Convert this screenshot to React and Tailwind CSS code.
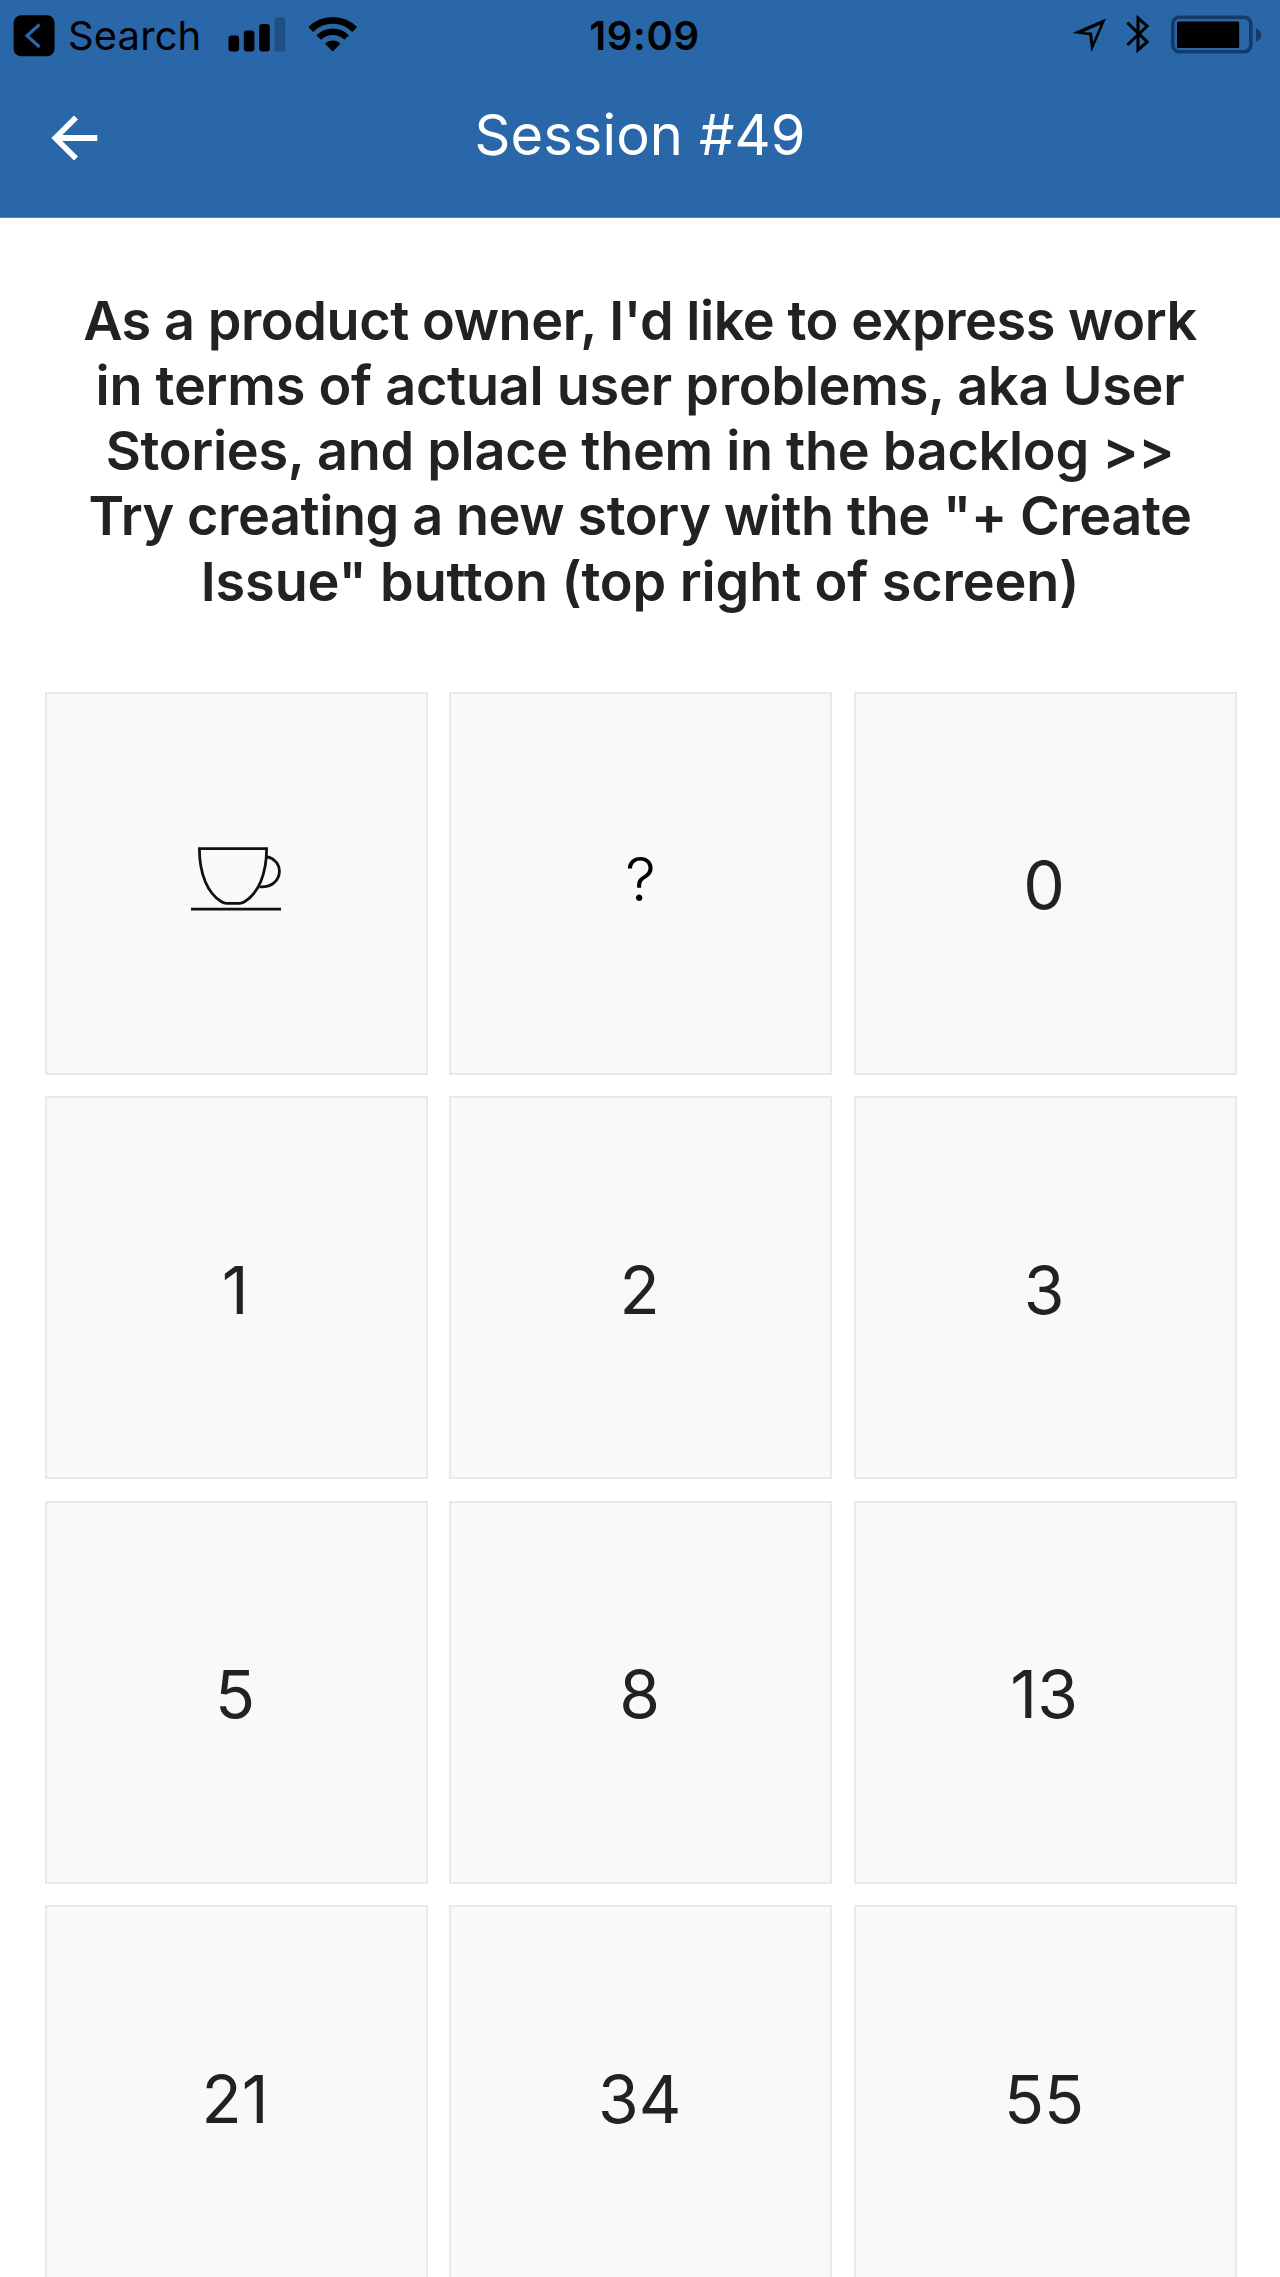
import React from 'react';

const cards = ['0', '1', '2', '3', '5', '8', '13', '21', '34', '55'];

const lines = [
  { text: "As a product owner, I'd like to express work", cls: 'tracking-[-0.43px]' },
  { text: 'in terms of actual user problems, aka User', cls: 'tracking-[-0.25px]' },
  { text: 'Stories, and place them in the backlog >>', cls: 'tracking-[-0.29px]' },
  { text: 'Try creating a new story with the "+ Create', cls: 'tracking-[-0.41px]' },
  { text: 'Issue" button (top right of screen)', cls: 'tracking-[-0.12px]' },
];

function BackToApp() {
  return (
    <svg className="ml-[13px] h-[42px] w-[42px]" viewBox="13 15 42 42" fill="none">
      <rect x="13.6" y="15.2" width="41" height="41" rx="7.5" fill="#000" />
      <path d="M39.5 24.5 27 35.8 39.5 47" stroke="#2967a8" strokeWidth="3.2" />
    </svg>
  );
}

function Signal() {
  return (
    <svg className="h-[72px] w-[58px]" viewBox="228 0 58 72">
      <rect x="228.5" y="35.5" width="10.6" height="16" rx="3" />
      <rect x="243.8" y="30.5" width="10.6" height="21" rx="3" />
      <rect x="259.2" y="24" width="10.6" height="27.5" rx="3" />
      <rect x="274.6" y="17.2" width="10.6" height="34.3" rx="3" fill="#1f4f82" />
    </svg>
  );
}

function Wifi() {
  return (
    <svg className="h-[72px] w-[50px]" viewBox="308 0 50 72" fill="none" stroke="#000">
      <path d="M310.7 29.5a31.1 31.1 0 0 1 44 0" strokeWidth="6.8" />
      <path d="M318.7 37.5a19.8 19.8 0 0 1 28 0" strokeWidth="6.6" />
      <path d="M332.7 51.5 325 43.8a10.9 10.9 0 0 1 15.4 0z" fill="#000" stroke="none" />
    </svg>
  );
}

function Location() {
  return (
    <svg className="h-[72px] w-[36px]" viewBox="1072 0 36 72">
      <path
        fillRule="evenodd"
        d="M1072.5 33 1106 18.6 1091.4 52.2 1089.2 35.2zM1083 32.2 1092 32.4 1093 42.3 1100.6 24.4z"
      />
    </svg>
  );
}

function Bluetooth() {
  return (
    <svg className="h-[72px] w-[26px]" viewBox="1125 0 26 72" fill="none">
      <path d="M1127.3 22.6 1147.2 42 1138 50V18l9.2 8-19.9 19" stroke="#000" strokeWidth="3" />
    </svg>
  );
}

function Battery() {
  return (
    <svg className="h-[72px] w-[92px]" viewBox="1170 0 92 72">
      <rect x="1172.8" y="17.2" width="78" height="34.6" rx="6.5" fill="none" stroke="#153c68" strokeWidth="3.6" />
      <rect x="1177" y="21.6" width="62.2" height="26.4" rx="1.5" />
      <path d="M1256 28q5.6 3.5 5.6 6.9t-5.6 6.9z" fill="#153c68" />
    </svg>
  );
}

function Cup() {
  return (
    <svg className="mt-[-7px] h-[65px] w-[90px]" viewBox="0 0 90 65" fill="none" stroke="#111" strokeWidth="2.8">
      <path d="M8.4 1.6H75.6C75.6 27 67.5 46 53.5 54.8Q51 56.3 48.5 56.3H35.5Q33 56.3 30.5 54.8C16.5 46 8.4 27 8.4 1.6z" />
      <path d="M75.5 9.6C83.5 11.2 88.4 17 88.4 24.3C88.4 33.5 80.5 40.8 68.5 39.8" />
      <path d="M0 62.2H90" />
    </svg>
  );
}

function Card({ children }) {
  return (
    <button className="flex h-[383px] items-center justify-center border-2 border-[#e9e9e9] bg-[#f9f9f9] text-[66px] leading-none">
      {children}
    </button>
  );
}

export default function App() {
  return (
    <div className="h-[2277px] w-[1280px] overflow-hidden bg-white font-['Inter',sans-serif] text-[#222]">
      <header className="h-[218px] border-b border-[#6f84a5] bg-[#2967a8] text-white">
        <div className="grid h-[72px] grid-cols-3 items-center text-[40px] text-black">
          <div className="flex items-center">
            <BackToApp />
            <span className="ml-[13px] mr-[26px] w-[134px] whitespace-nowrap tracking-[0.1px]">Search</span>
            <Signal />
            <span className="ml-[22px]"><Wifi /></span>
          </div>
          <span className="pl-[9px] text-center font-semibold tracking-[0.7px]">19:09</span>
          <div className="flex items-center justify-end pr-[18px]">
            <Location />
            <span className="ml-[17px] mr-[19px]"><Bluetooth /></span>
            <Battery />
          </div>
        </div>
        <div className="grid h-[126px] grid-cols-[100px_1fr_100px] items-center">
          <svg className="ml-[50px] mt-[5px] h-[46px] w-[48px]" viewBox="50 115.5 48 46" fill="none" stroke="#fff">
            <path d="M76 118 55.3 138.5 76 159" strokeWidth="5.6" />
            <path d="M56 138.5H97.3" strokeWidth="6.2" />
          </svg>
          <div className="text-center text-[56px] tracking-[0.1px]">Session #49</div>
        </div>
      </header>
      <h1 className="flex flex-col items-center pt-[69.7px] text-[54px] font-semibold leading-[65.2px]">
        {lines.map((l) => (
          <span key={l.text} className={`whitespace-nowrap ${l.cls}`}>{l.text}</span>
        ))}
      </h1>
      <main className="ml-[44.6px] mt-[78px] grid w-[1192px] grid-cols-3 gap-[21.5px]">
        <Card><Cup /></Card>
        <Card><span className="mt-[-8px] text-[61px] font-light text-black">?</span></Card>
        {cards.map((c) => (
          <Card key={c}><span className="pr-[2px] pt-[4px]">{c}</span></Card>
        ))}
      </main>
    </div>
  );
}
